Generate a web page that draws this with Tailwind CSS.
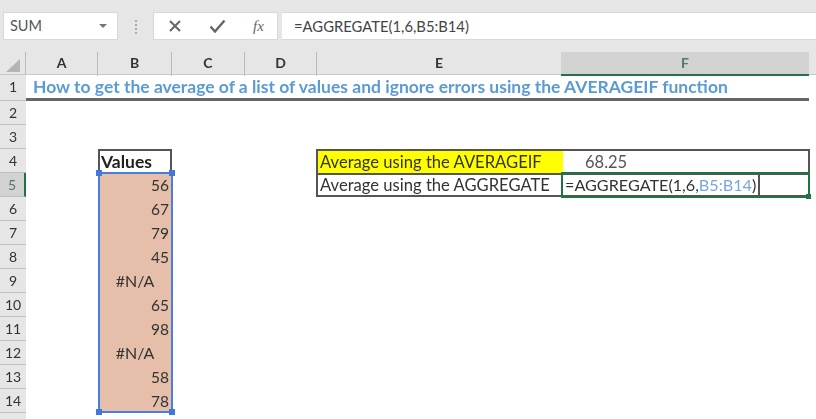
<!DOCTYPE html>
<html lang="en">
<head>
  <meta charset="UTF-8">
  <title>AGGREGATE average</title>
  <script src="https://cdn.jsdelivr.net/npm/@tailwindcss/browser@4"></script>
</head>
<body class="bg-white overflow-hidden font-['Lato','Noto_Sans',sans-serif] text-[#333]">
<div class="w-[816px] h-[419px] overflow-hidden blur-[0.6px]">

  <!-- formula bar -->
  <div class="h-[52px] bg-[#e6e6e6] pt-3 pl-[3px] flex items-start">
    <div class="w-[115px] h-7 bg-white border border-[#d8d8d8] flex items-center justify-between pl-1.5 pr-2.5 text-[14.5px] text-[#555]">
      <span>SUM</span>
      <span class="w-0 h-0 border-x-4 border-x-transparent border-t-4 border-t-[#777]"></span>
    </div>
    <div class="w-[35px] flex flex-col items-center gap-[2px] pt-2">
      <span class="size-[2px] bg-[#aaa]"></span><span class="size-[2px] bg-[#aaa]"></span><span class="size-[2px] bg-[#aaa]"></span><span class="size-[2px] bg-[#aaa]"></span>
    </div>
    <div class="w-[125px] h-7 bg-white border border-[#d8d8d8] flex items-center pl-[14px] text-[#666]">
      <svg width="14" height="14" viewBox="0 0 14 14" fill="none" stroke="#666" stroke-width="2"><path d="M2 2l10 10M12 2L2 12"/></svg>
      <svg class="ml-[27px]" width="17" height="14" viewBox="0 0 17 14" fill="none" stroke="#666" stroke-width="2.4"><path d="M1.5 7.5l4.5 5L15.5 1.5"/></svg>
      <span class="ml-[27px] font-['Liberation_Serif',serif] italic text-[15px] leading-none">fx</span>
    </div>
    <div class="w-[534px] h-7 ml-1 bg-white border-y border-[#d8d8d8] flex items-center pl-3 text-[14.8px] text-[#444]">=AGGREGATE(1,6,B5:B14)</div>
  </div>

  <!-- sheet -->
  <div class="relative">
    <!-- column headers -->
    <div class="grid grid-cols-[26px_72px_74px_73px_72px_244px_248px_1fr] h-[23px] bg-[#e6e6e6] border-b border-[#c8c8c8] text-[14px] text-center leading-[22px] font-bold">
      <div class="flex items-end justify-center pb-1 border-r border-[#bbb]"><span class="w-0 h-0 border-l-[14px] border-l-transparent border-b-[13px] border-b-[#b4b4b4]"></span></div>
      <div class="border-r border-[#bbb]">A</div>
      <div class="border-r border-[#bbb]">B</div>
      <div class="border-r border-[#bbb]">C</div>
      <div class="border-r border-[#bbb]">D</div>
      <div>E</div>
      <div class="bg-[#d2d2d2] border-b-2 border-[#217346] text-[#4c7c63]">F</div>
      <div></div>
    </div>

    <!-- row 1 -->
    <div class="grid grid-cols-[26px_1fr] h-[26px]">
      <div class="bg-[#e6e6e6] border-b border-[#c0c0c0] text-[14px] text-center leading-[24px]">1</div>
      <div class="w-[783px] h-[26px] border-b-[3px] border-[#666] pl-[7px] text-[17.5px] leading-[24px] font-bold text-[#5b9bd5] whitespace-nowrap">How to get the average of a list of values and ignore errors using the AVERAGEIF function</div>
    </div>

    <div class="grid grid-cols-[26px_72px_74px_73px_72px_245px_248px_1fr] auto-rows-[24px] text-[15.5px] leading-[24px]">
      <div class="col-start-1 bg-[#e6e6e6] border-b border-[#c0c0c0] text-[14px] text-center">2</div>

      <div class="col-start-1 bg-[#e6e6e6] border-b border-[#c0c0c0] text-[14px] text-center">3</div>

      <div class="col-start-1 bg-[#e6e6e6] border-b border-[#c0c0c0] text-[14px] text-center">4</div>
      <div class="col-start-3 border-2 border-b-0 border-[#555] pl-[1px] text-[17.5px] font-bold text-[#222] leading-[22px]">Values</div>
      <div class="col-start-6 -ml-px mr-[-1px] border-2 border-r-0 border-[#555] border-b-0 bg-[#ffff00] pl-[2px] text-[16.6px] leading-[22px] text-[#333] whitespace-nowrap">Average using the AVERAGEIF</div>
      <div class="col-start-7 border-t-2 border-r-2 border-[#555] pl-[23px] text-[16.5px] leading-[22px] text-[#555]">68.25</div>

      <div class="col-start-1 bg-[#d2d2d2] border-b border-r-2 border-[#c0c0c0] border-r-[#217346] text-[14px] text-center text-[#4c7c63]">5</div>
      <div class="col-start-3 bg-[#e6bfab] text-right pr-[3px]">56</div>
      <div class="col-start-6 -ml-px border-x-2 border-y-2 border-r-0 border-[#555] pl-[2px] text-[16.6px] leading-[20px] text-[#333] whitespace-nowrap">Average using the AGGREGATE</div>
      <div class="col-start-7 border-y-2 border-r-2 border-[#555] pl-[3px] text-[16.2px] leading-[20px] whitespace-nowrap">=AGGREGATE(1,6,<span class="text-[#7aa5e0]">B5:B14</span>)</div>

      <div class="col-start-1 bg-[#e6e6e6] border-b border-[#c0c0c0] text-[14px] text-center">6</div>
      <div class="col-start-3 bg-[#e6bfab] text-right pr-[3px]">67</div>

      <div class="col-start-1 bg-[#e6e6e6] border-b border-[#c0c0c0] text-[14px] text-center">7</div>
      <div class="col-start-3 bg-[#e6bfab] text-right pr-[3px]">79</div>

      <div class="col-start-1 bg-[#e6e6e6] border-b border-[#c0c0c0] text-[14px] text-center">8</div>
      <div class="col-start-3 bg-[#e6bfab] text-right pr-[3px]">45</div>

      <div class="col-start-1 bg-[#e6e6e6] border-b border-[#c0c0c0] text-[14px] text-center">9</div>
      <div class="col-start-3 bg-[#e6bfab] text-center text-[16px]">#N/A</div>

      <div class="col-start-1 bg-[#e6e6e6] border-b border-[#c0c0c0] text-[14px] text-center">10</div>
      <div class="col-start-3 bg-[#e6bfab] text-right pr-[3px]">65</div>

      <div class="col-start-1 bg-[#e6e6e6] border-b border-[#c0c0c0] text-[14px] text-center">11</div>
      <div class="col-start-3 bg-[#e6bfab] text-right pr-[3px]">98</div>

      <div class="col-start-1 bg-[#e6e6e6] border-b border-[#c0c0c0] text-[14px] text-center">12</div>
      <div class="col-start-3 bg-[#e6bfab] text-center text-[16px]">#N/A</div>

      <div class="col-start-1 bg-[#e6e6e6] border-b border-[#c0c0c0] text-[14px] text-center">13</div>
      <div class="col-start-3 bg-[#e6bfab] text-right pr-[3px]">58</div>

      <div class="col-start-1 bg-[#e6e6e6] border-b border-[#c0c0c0] text-[14px] text-center">14</div>
      <div class="col-start-3 bg-[#e6bfab] text-right pr-[3px]">78</div>

      <div class="col-start-1 bg-[#e6e6e6] text-[14px]">&nbsp;</div>
    </div>

    <!-- B5:B14 range highlight -->
    <div class="absolute left-[98px] top-[120px] w-[75px] h-[241px] border-2 border-[#4a7fd8]">
      <span class="absolute -left-[4px] -top-[4px] size-[6px] bg-[#3f78d8]"></span>
      <span class="absolute -right-[4px] -top-[4px] size-[6px] bg-[#3f78d8]"></span>
      <span class="absolute -left-[4px] -bottom-[4px] size-[6px] bg-[#3f78d8]"></span>
      <span class="absolute -right-[4px] -bottom-[4px] size-[6px] bg-[#3f78d8]"></span>
    </div>

    <!-- active cell F5 -->
    <div class="absolute left-[561px] top-[120px] w-[249px] h-[26px] border-2 border-[#217346]">
      <span class="absolute -right-[3px] -bottom-[3px] size-[5px] bg-[#217346]"></span>
      <span class="absolute left-[195px] top-0 w-[2px] h-[22px] bg-[#555]"></span>
    </div>
  </div>
</div>
</body>
</html>
